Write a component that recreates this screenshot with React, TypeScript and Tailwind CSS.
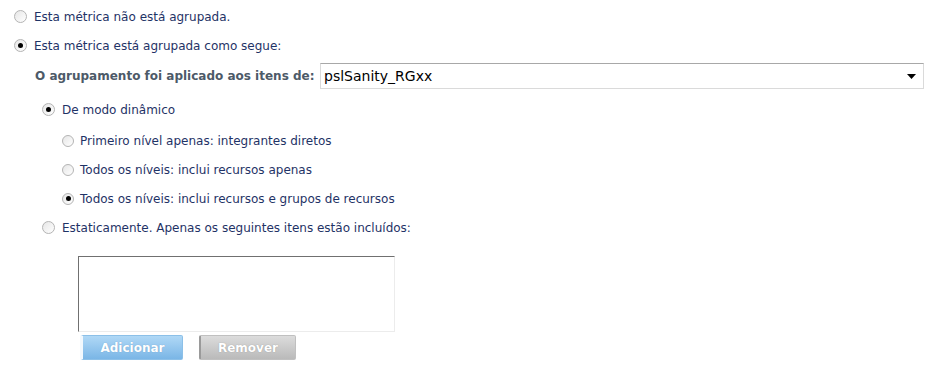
import { ReactNode } from 'react';

function Radio({ checked, size = 13 }: { checked?: boolean; size?: number }) {
    return (
        <span
            className="relative inline-flex shrink-0 items-center justify-center rounded-full border border-[#b4b4b4] bg-gradient-to-br from-[#e6e6e6] to-white"
            style={{ width: size, height: size }}
        >
            {checked && <span className="h-[5px] w-[5px] rounded-full bg-black" />}
        </span>
    );
}

function Option({
    checked,
    children,
    indent,
    gap,
    size,
}: {
    checked?: boolean;
    children: ReactNode;
    indent: string;
    gap: string;
    size?: number;
}) {
    return (
        <div className={`flex h-[29px] items-center ${indent} ${gap}`}>
            <Radio checked={checked} size={size} />
            <span>{children}</span>
        </div>
    );
}

export default function App() {
    return (
        <div className="h-[382px] w-[949px] bg-white pt-[2px] font-['DejaVu_Sans',sans-serif] text-[12px] text-[#1f3366]">
            <Option indent="pl-[14px]" gap="gap-[7px]">
                Esta métrica não está agrupada.
            </Option>
            <Option checked indent="pl-[14px]" gap="gap-[7px]">
                Esta métrica está agrupada como segue:
            </Option>

            <div className="mt-[3px] flex h-[26px] items-center pl-[35px]">
                <span className="w-[285px] font-bold text-[#4d5a68]">
                    O agrupamento foi aplicado aos itens de:
                </span>
                <div className="flex h-[26px] w-[604px] items-center justify-between border border-[#dadada] border-t-[#a8a8a8] bg-white pr-[7px] pl-[3px]">
                    <span className="text-[14px] text-black">pslSanity_RGxx</span>
                    <svg width="9" height="5" viewBox="0 0 9 5">
                        <path d="M0 0H9L4.5 5Z" fill="#000" />
                    </svg>
                </div>
            </div>

            <div className="mt-[6px]">
                <Option checked indent="pl-[42px]" gap="gap-[7px]">
                    De modo dinâmico
                </Option>
            </div>

            <div className="mt-[2px]">
                <Option indent="pl-[62px]" gap="gap-[6px]" size={12}>
                    Primeiro nível apenas: integrantes diretos
                </Option>
                <Option indent="pl-[62px]" gap="gap-[6px]" size={12}>
                    Todos os níveis: inclui recursos apenas
                </Option>
                <Option checked indent="pl-[62px]" gap="gap-[6px]" size={12}>
                    Todos os níveis: inclui recursos e grupos de recursos
                </Option>
                <Option indent="pl-[42px]" gap="gap-[7px]">
                    Estaticamente. Apenas os seguintes itens estão incluídos:
                </Option>
            </div>

            <div className="mt-[14px] ml-[78px] h-[76px] w-[317px] border border-[#ececec] border-t-[#707070] border-l-[#707070] bg-white" />

            <div className="mt-[3px] ml-[80px] flex gap-[16px] text-[12px] font-bold text-white">
                <button className="flex h-[25px] w-[103px] items-center justify-center rounded-[2px] border border-[#8cc0e8] border-l-[3px] border-l-[#f2f8fd] bg-gradient-to-b from-[#b0d8f6] to-[#7ab6e6] [text-shadow:0_0_1px_#6a9ac0]">
                    Adicionar
                </button>
                <button className="flex h-[25px] w-[97px] items-center justify-center rounded-[2px] border border-[#c0c0c0] border-l-[2px] border-l-[#9a9a9a] bg-gradient-to-b from-[#dcdcdc] to-[#bababa] [text-shadow:0_0_1px_#8a8a8a]">
                    Remover
                </button>
            </div>
        </div>
    );
}
